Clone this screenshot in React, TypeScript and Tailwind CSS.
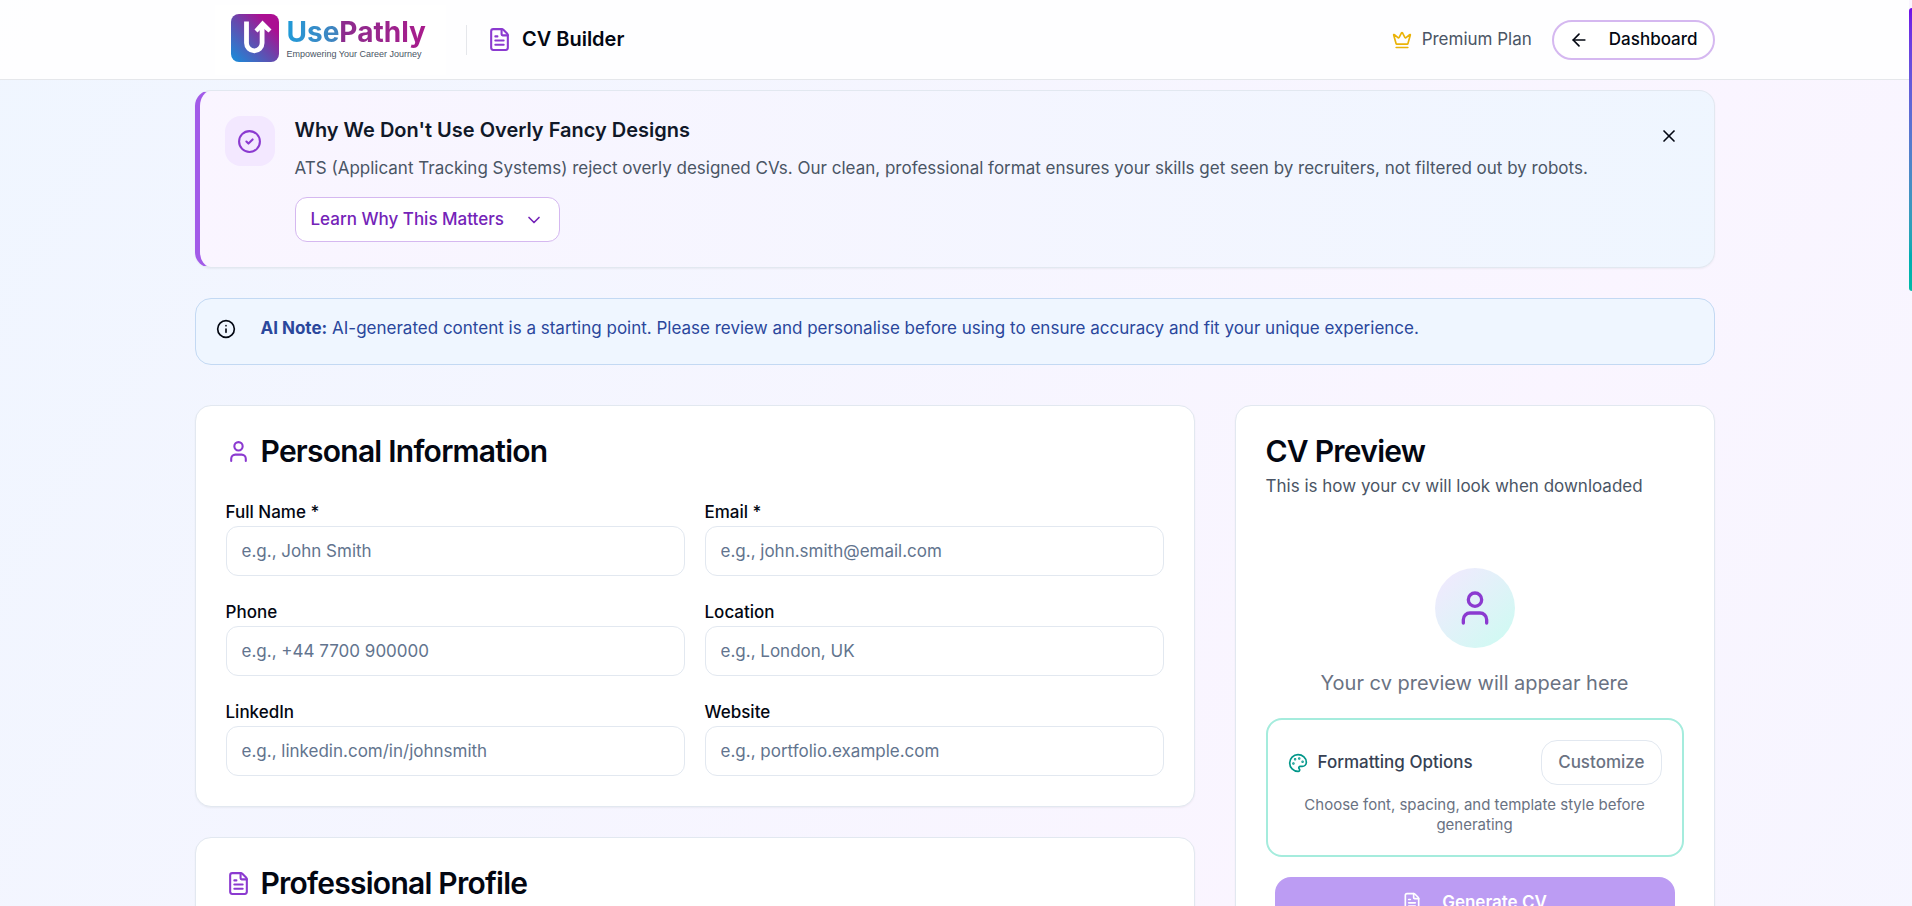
import React, { useState } from 'react';
import {
  ArrowLeft, ChevronDown, CircleCheck, Crown, FileText,
  Info, Palette, User, X
} from 'lucide-react';

const fields = [
  { id: 'fullName', label: 'Full Name *', placeholder: 'e.g., John Smith' },
  { id: 'email', label: 'Email *', placeholder: 'e.g., john.smith@email.com' },
  { id: 'phone', label: 'Phone', placeholder: 'e.g., +44 7700 900000' },
  { id: 'location', label: 'Location', placeholder: 'e.g., London, UK' },
  { id: 'linkedin', label: 'LinkedIn', placeholder: 'e.g., linkedin.com/in/johnsmith' },
  { id: 'website', label: 'Website', placeholder: 'e.g., portfolio.example.com' }
];

function Logo() {
  return (
    <a href="#" className="flex items-center gap-2 bg-white pl-4 pr-5 pb-1 h-[70px]">
      <svg viewBox="0 0 48 48" className="w-12 h-12">
        <defs>
          <linearGradient id="logo" x1="0" y1="1" x2="1" y2="0">
            <stop offset="0" stopColor="#1590dc" />
            <stop offset="0.5" stopColor="#6a45ab" />
            <stop offset="0.8" stopColor="#ab0f92" />
          </linearGradient>
        </defs>
        <rect width="48" height="48" rx="8" fill="url(#logo)" />
        <path d="M15.500 7.500v21.500a7.800 7.800 0 0 0 15.600 0V12" fill="none" stroke="#fff" strokeWidth="4.800" />
        <path d="M31.500 6.500 40.500 15.500l-3 3-6-5-5 5-3-3z" fill="#fff" />
      </svg>
      <span className="flex flex-col">
        <span className="text-[28px] leading-8 font-bold">
          <span className="bg-linear-to-r from-[#1e9ad8] to-[#4182bd] bg-clip-text text-transparent">Use</span>
          <span className="bg-linear-to-r from-[#8b2c8e] to-[#a81a8c] bg-clip-text text-transparent">Pathly</span>
        </span>
        <span className="text-[9px] leading-3 font-['Liberation_Sans',sans-serif] text-gray-600">Empowering Your Career Journey</span>
      </span>
    </a>
  );
}

export default function CVBuilder() {
  const [showBanner, setShowBanner] = useState(true);
  const [values, setValues] = useState<Record<string, string>>({});

  return (
    <div className="h-screen overflow-hidden pr-[3px] font-['Inter',sans-serif] text-[17px] leading-[25px] text-gray-950 bg-linear-to-br from-blue-50 via-purple-50 to-blue-50 bg-[length:100%_3098px] bg-[position:0_-199px] bg-no-repeat">
      {/* Header */}
      <header className="bg-white/90 border-b border-gray-200">
        <div className="max-w-[1600px] mx-auto px-10 h-[79px] flex items-center justify-between">
          <div className="flex items-center gap-5 pl-5">
            <Logo />
            <div className="w-px h-[30px] bg-gray-200" />
            <div className="flex items-center gap-[10px]">
              <FileText className="w-[25px] h-[25px] text-[#8b3ad0]" />
              <h1 className="text-[20px] font-semibold">CV Builder</h1>
            </div>
          </div>
          <div className="flex items-center gap-5">
            <div className="flex items-center gap-[10px] text-gray-600">
              <Crown className="w-5 h-5 text-[#eab308]" />
              <span>Premium Plan</span>
            </div>
            <button className="h-10 px-[15px] flex items-center gap-5 bg-white border-2 border-[#d5b8f0] rounded-full font-medium">
              <ArrowLeft className="w-5 h-5" />
              Dashboard
            </button>
          </div>
        </div>
      </header>

      <main className="max-w-[1600px] mx-auto px-10 pt-[10px]">
        {/* ATS banner */}
        {showBanner && (
          <section className="mb-[30px] p-[25px] flex items-start gap-5 rounded-2xl shadow-xs border border-l-[5px] border-slate-200 border-l-[#a25be8] bg-linear-to-r from-purple-50 to-blue-50">
            <div className="w-[50px] h-[50px] flex items-center justify-center rounded-2xl bg-purple-100">
              <CircleCheck className="w-[25px] h-[25px] text-[#8b3ad0]" />
            </div>
            <div className="flex-1">
              <h2 className="text-[20px] leading-7 font-semibold text-gray-900">Why We Don't Use Overly Fancy Designs</h2>
              <p className="mt-3 text-gray-600">
                ATS (Applicant Tracking Systems) reject overly designed CVs. Our clean, professional format ensures your skills get seen by recruiters, not filtered out by robots.
              </p>
              <button className="mt-4 h-[45px] px-[15px] flex items-center gap-5 bg-white border border-[#d5b8f0] rounded-xl font-medium text-[#7423b8]">
                Learn Why This Matters
                <ChevronDown className="w-5 h-5" />
              </button>
            </div>
            <button aria-label="Dismiss" onClick={() => setShowBanner(false)} className="w-10 h-10 flex items-center justify-center">
              <X className="w-5 h-5" />
            </button>
          </section>
        )}

        {/* AI note */}
        <div role="note" className="mb-10 px-5 pt-[17px] pb-[23px] flex items-center gap-[25px] rounded-2xl border border-[#c3d9f3] bg-blue-50">
          <Info className="w-5 h-5" />
          <p className="text-[#2a479c]">
            <strong className="font-bold">AI Note:</strong> AI-generated content is a starting point. Please review and personalise before using to ensure accuracy and fit your unique experience.
          </p>
        </div>

        <div className="grid grid-cols-3 gap-10 items-start">
          <div className="col-span-2 space-y-[30px]">
            {/* Personal Information */}
            <section className="p-[30px] bg-white border border-slate-200 rounded-2xl shadow-xs">
              <h2 className="flex items-center gap-[10px] text-[30px] leading-[30px] font-semibold tracking-tight">
                <User className="w-[25px] h-[25px] text-[#8b3ad0]" />
                Personal Information
              </h2>
              <div className="mt-[30px] grid grid-cols-2 gap-5">
                {fields.map(field => (
                  <div key={field.id}>
                    <label htmlFor={field.id} className="block h-[30px] leading-8 font-medium">{field.label}</label>
                    <input
                      id={field.id}
                      value={values[field.id] || ''}
                      onChange={e => setValues({ ...values, [field.id]: e.target.value })}
                      placeholder={field.placeholder}
                      className="block w-full h-[50px] px-[15px] bg-white border border-slate-200 rounded-xl placeholder:text-slate-500"
                    />
                  </div>
                ))}
              </div>
            </section>

            {/* Professional Profile */}
            <section className="p-[30px] bg-white border border-slate-200 rounded-2xl shadow-xs">
              <h2 className="flex items-center gap-[10px] text-[30px] leading-[30px] font-semibold tracking-tight">
                <FileText className="w-[25px] h-[25px] text-[#8b3ad0]" />
                Professional Profile
              </h2>
            </section>
          </div>

          {/* Preview */}
          <section className="p-[30px] bg-white border border-slate-200 rounded-2xl shadow-xs">
            <h2 className="text-[30px] leading-[30px] font-semibold tracking-tight">CV Preview</h2>
            <p className="mt-2 text-gray-600">This is how your cv will look when downloaded</p>
            <div className="pt-[69px] flex flex-col items-center">
              <div className="w-20 h-20 flex items-center justify-center rounded-full bg-linear-to-br from-purple-100 to-teal-100">
                <User className="w-10 h-10 text-[#8b3ad0]" />
              </div>
              <p className="mt-5 text-[20px] leading-[30px] text-gray-500">Your cv preview will appear here</p>
            </div>
            <div className="mt-5 p-5 border-2 border-[#a5ecdd] rounded-2xl">
              <div className="flex items-center justify-between">
                <div className="flex items-center gap-[10px] font-medium text-gray-700">
                  <Palette className="w-5 h-5 text-teal-600" />
                  <span>Formatting Options</span>
                </div>
                <button className="h-[45px] px-4 bg-white border border-slate-200 rounded-2xl font-medium text-gray-500">Customize</button>
              </div>
              <p className="mt-[10px] text-[15px] leading-5 text-center text-gray-500">
                Choose font, spacing, and template style before generating
              </p>
            </div>
            <button className="mt-5 w-full max-w-[400px] h-[50px] mx-auto flex items-center justify-center gap-5 bg-[#bc9cf3] rounded-2xl font-semibold text-white">
              <FileText className="w-5 h-5" />
              Generate CV
            </button>
          </section>
        </div>
      </main>

      {/* Scroll thumb */}
      <div className="fixed top-2 right-0 w-[3px] h-[283px] rounded-l-full bg-linear-to-b from-violet-700 to-teal-500" />
    </div>
  );
}
